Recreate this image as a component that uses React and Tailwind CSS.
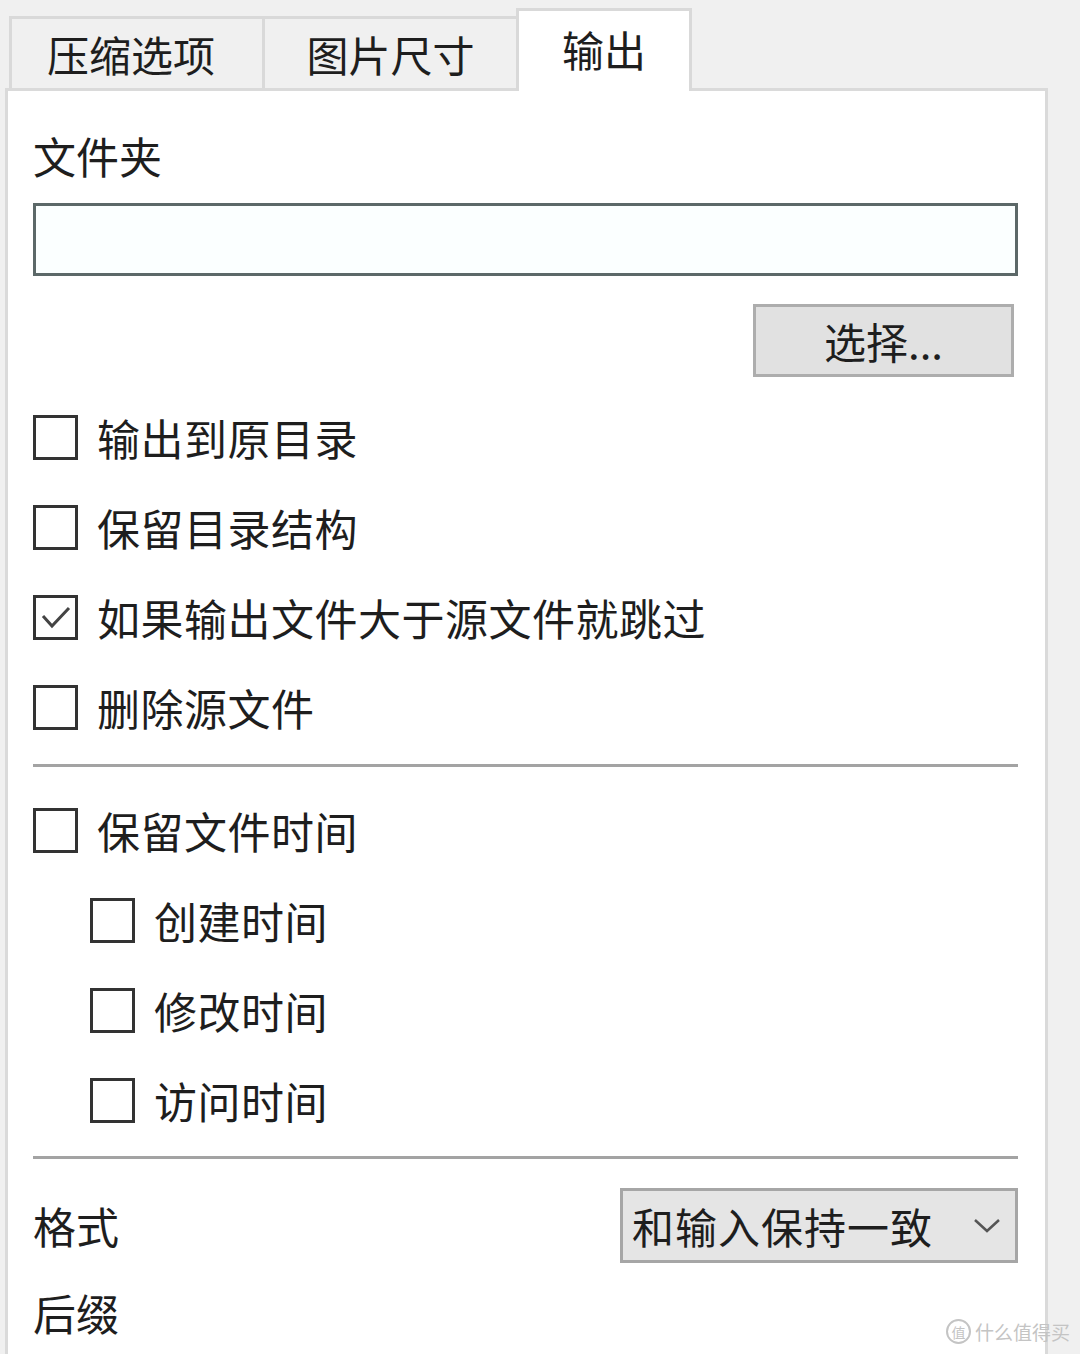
const font = { fontFamily: '"Noto Sans CJK SC", "Noto Sans", sans-serif' };

function Box({ checked }) {
  return (
    <div className="w-[45px] h-[45px] border-[3px] border-[#333333] bg-white flex items-center justify-center shrink-0">
      {checked && (
        <svg width="34" height="30" viewBox="0 0 34 30">
          <polyline points="4,14 13,24 30,6" fill="none" stroke="#444" strokeWidth="3" />
        </svg>
      )}
    </div>
  );
}

function Check({ label, checked, sub }) {
  return (
    <div className={`h-[90px] flex items-center gap-[19px] ${sub ? 'pl-[57px]' : ''}`}>
      <Box checked={checked} />
      <span className="text-[43px] leading-none text-[#1e1e1e] tracking-[0.5px]">{label}</span>
    </div>
  );
}

export default function App() {
  return (
    <div className="relative w-[1080px] h-[1354px] bg-[#f0f0f0] overflow-hidden" style={font}>
      {/* tabs */}
      <div className="flex items-end h-[88px] pl-[9px]">
        <div className="w-[253px] h-[72px] border-t-[3px] border-l-[3px] border-[#d9d9d9] bg-[#f0f0f0] flex items-center justify-center pr-[12px] text-[42px] text-[#1e1e1e]">
          压缩选项
        </div>
        <div className="w-[254px] h-[72px] border-t-[3px] border-l-[3px] border-[#d9d9d9] bg-[#f0f0f0] flex items-center justify-center text-[42px] text-[#1e1e1e]">
          图片尺寸
        </div>
        <div className="relative z-10 -mb-[3px] w-[176px] h-[83px] border-t-[3px] border-x-[3px] border-[#d9d9d9] bg-white flex items-center justify-center pb-[6px] text-[42px] text-[#1e1e1e]">
          输出
        </div>
      </div>

      {/* panel */}
      <div className="ml-[5px] w-[1043px] h-[1300px] border-[3px] border-[#dadada] bg-white pl-[25px] pr-[27px] pt-[34px]">
        <div className="h-[60px] flex items-center text-[43px] text-[#1e1e1e]">文件夹</div>

        <div className="mt-[18px] h-[73px] border-[3px] border-[#5c6868] bg-[#fbffff]" />

        <div className="mt-[28px] flex justify-end pr-[4px]">
          <div className="w-[261px] h-[73px] border-[3px] border-[#adadad] bg-[#e1e1e1] flex items-center justify-center text-[42px] text-[#1e1e1e]">
            选择...
          </div>
        </div>

        <div className="mt-[15px]">
          <Check label="输出到原目录" />
          <Check label="保留目录结构" />
          <Check label="如果输出文件大于源文件就跳过" checked />
          <Check label="删除源文件" />
        </div>

        <div className="mt-[12px] h-[3px] bg-[#a3a3a3]" />

        <div className="mt-[18px]">
          <Check label="保留文件时间" />
          <Check label="创建时间" sub />
          <Check label="修改时间" sub />
          <Check label="访问时间" sub />
        </div>

        <div className="mt-[11px] h-[3px] bg-[#a3a3a3]" />

        <div className="mt-[29px] flex items-center justify-between">
          <span className="text-[43px] text-[#1e1e1e] leading-none">格式</span>
          <div className="w-[398px] h-[75px] border-[3px] border-[#a6a6a6] bg-[#e5e5e5] flex items-center justify-between pl-[9px] pr-[14px]">
            <span className="text-[42px] text-[#1e1e1e] leading-none tracking-[1px]">和输入保持一致</span>
            <svg width="28" height="16" viewBox="0 0 28 16">
              <polyline points="2,2 14,13 26,2" fill="none" stroke="#555" strokeWidth="2.5" />
            </svg>
          </div>
        </div>

        <div className="mt-[19px] h-[60px] flex items-center text-[43px] text-[#1e1e1e]">后缀</div>
      </div>

      {/* watermark */}
      <div className="absolute right-[10px] bottom-[10px] flex items-center gap-[4px] text-[#c4c4c4]">
        <span className="w-[25px] h-[25px] rounded-full border-[2px] border-[#c4c4c4] flex items-center justify-center text-[14px] leading-none">值</span>
        <span className="text-[19px] leading-none">什么值得买</span>
      </div>
    </div>
  );
}
